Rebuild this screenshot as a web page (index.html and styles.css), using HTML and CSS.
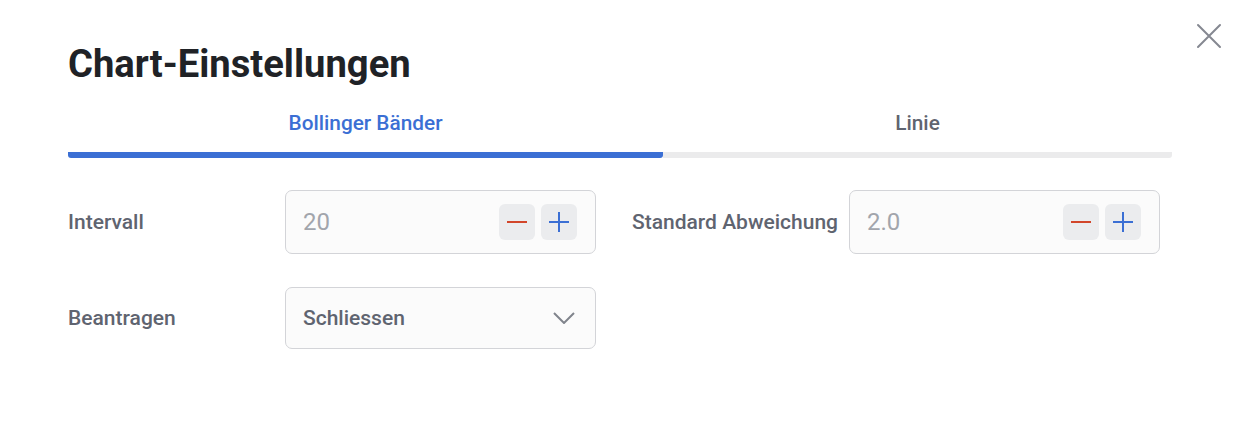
FILE: index.html
```html
<!DOCTYPE html>
<html lang="de">
<head>
<meta charset="utf-8">
<link rel="stylesheet" href="styles.css">
</head>
<body>
<div class="modal">
  <button class="close" aria-label="Schließen">
    <svg width="26" height="26" viewBox="0 0 26 26"><path d="M2 2 L24 24 M24 2 L2 24" stroke="#858891" stroke-width="2" stroke-linecap="round" fill="none"/></svg>
  </button>
  <h1 class="title">Chart-Einstellungen</h1>
  <div class="tabs">
    <div class="tab tab-active">Bollinger Bänder</div>
    <div class="tab">Linie</div>
  </div>
  <div class="form">
    <div class="group">
      <div class="label">Intervall</div>
      <div class="field">
        <span class="value">20</span>
        <div class="steps">
          <span class="step"><svg width="22" height="22" viewBox="0 0 22 22"><path d="M1 11 H21" stroke="#d2462a" stroke-width="2"/></svg></span>
          <span class="step"><svg width="22" height="22" viewBox="0 0 22 22"><path d="M1 11 H21 M11 1 V21" stroke="#3b6fd4" stroke-width="2"/></svg></span>
        </div>
      </div>
    </div>
    <div class="group">
      <div class="label">Standard Abweichung</div>
      <div class="field">
        <span class="value">2.0</span>
        <div class="steps">
          <span class="step"><svg width="22" height="22" viewBox="0 0 22 22"><path d="M1 11 H21" stroke="#d2462a" stroke-width="2"/></svg></span>
          <span class="step"><svg width="22" height="22" viewBox="0 0 22 22"><path d="M1 11 H21 M11 1 V21" stroke="#3b6fd4" stroke-width="2"/></svg></span>
        </div>
      </div>
    </div>
    <div class="group">
      <div class="label">Beantragen</div>
      <div class="field select">
        <span class="sel-value">Schliessen</span>
        <svg width="22" height="12" viewBox="0 0 22 12"><path d="M1 1 L11 11 L21 1" stroke="#80848c" stroke-width="2" fill="none"/></svg>
      </div>
    </div>
  </div>
</div>
</body>
</html>
```

FILE: styles.css
```css
* { box-sizing: border-box; }
html, body { margin: 0; padding: 0; background: #ffffff; }
body { font-family: Roboto, "Liberation Sans", sans-serif; width: 1242px; height: 422px; overflow: hidden; }
.modal { position: relative; padding: 40px 70px 0 68px; }
.close { position: absolute; top: 23px; right: 20px; background: none; border: 0; padding: 0; cursor: pointer; display: flex; }
.title { margin: 0; font-size: 38.2px; font-weight: 700; color: #202226; line-height: 48px; }
.tabs { display: flex; margin-top: 16px; width: 1104px; }
.tab { font-size: 20.8px; font-weight: 500; color: #5f6470; text-align: center; height: 54px; padding-top: 6px; line-height: 26px; border-bottom: 6px solid #ebebec; flex: 1; }
.tab-active { flex: 0 0 595px; color: #3b6fd4; border-bottom-color: #3b6fd4; border-radius: 0 0 3px 3px; }
.tabs .tab:last-child { border-radius: 0 0 3px 0; }
.form { display: grid; grid-template-columns: 528px 528px; column-gap: 36px; row-gap: 33px; margin-top: 32px; }
.group { display: flex; align-items: center; }
.label { flex: 0 0 217px; font-size: 21px; color: #5f6470; font-weight: 500; }
.field { flex: 0 0 311px; height: 64px; border: 1px solid #d3d4d8; border-radius: 7px; background: #fbfbfb; display: flex; align-items: center; justify-content: space-between; padding: 0 18px 0 17px; }
.value { font-size: 24px; color: #a2a5ac; }
.steps { display: flex; gap: 6px; }
.step { width: 36px; height: 36px; border-radius: 6px; background: #ebecee; display: flex; align-items: center; justify-content: center; }
.select { height: 62px; padding: 0 20px 0 17px; }
.sel-value { font-size: 21px; color: #5f6470; font-weight: 500; }
```
